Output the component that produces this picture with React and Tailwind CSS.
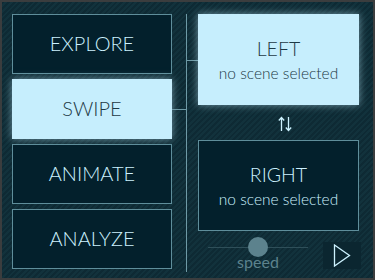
import { useState } from 'react';

const modes = ['EXPLORE', 'SWIPE', 'ANIMATE', 'ANALYZE'];

function ModeButton({ label, active, onClick }) {
  return (
    <button
      onClick={onClick}
      className={
        active
          ? 'h-[60px] w-full flex items-center justify-center pb-[3px] bg-[#c6eefd] text-[#1d3945] text-[20px] font-light shadow-[0_0_8px_rgba(190,235,252,0.55)]'
          : 'h-[60px] w-full flex items-center justify-center pb-[3px] bg-[#03202c] border border-[#5f8e9b] text-[#cdf2ff] text-[20px] font-light'
      }
    >
      {label}
    </button>
  );
}

function SceneBox({ title, active }) {
  return (
    <div
      className={
        active
          ? 'h-[91px] flex flex-col items-center justify-center bg-[#c6eefd] text-[#1d3945] font-light shadow-[0_0_8px_rgba(190,235,252,0.55)]'
          : 'h-[91px] flex flex-col items-center justify-center bg-[#03202c] border border-[#5f8e9b] text-[#cdf2ff] font-light'
      }
    >
      <span className="text-[19.5px] leading-[22px]">{title}</span>
      <span className="text-[15.5px] leading-[18px] mt-[4px]">no scene selected</span>
    </div>
  );
}

export default function App() {
  const [mode, setMode] = useState('SWIPE');
  const [speed, setSpeed] = useState(50);

  return (
    <div
      className="w-[375px] h-[280px] border-2 border-[#3b3d3e] bg-[repeating-linear-gradient(135deg,#0e2a34_0px,#0e2a34_2px,#12323c_2px,#12323c_4px)] flex pl-[10px] pt-[12px]"
      style={{ fontFamily: 'Lato, "Noto Sans", sans-serif' }}
    >
      {/* mode buttons */}
      <div className="w-[160px] flex flex-col gap-[5px]">
        {modes.map(m => (
          <ModeButton key={m} label={m} active={mode === m} onClick={() => setMode(m)} />
        ))}
      </div>

      {/* connector */}
      <div className="flex h-[258px]">
        <div className="w-[14px] pt-[95px]">
          <div className="h-px bg-[#6f9aa6]" />
        </div>
        <div className="w-px bg-[#6f9aa6]" />
        <div className="w-[11px] pt-[46px]">
          <div className="h-px bg-[#6f9aa6]" />
        </div>
      </div>

      {/* left / right scenes */}
      <div className="w-[161px] flex flex-col">
        <SceneBox title="LEFT" active />
        <div className="h-[35px] flex items-center justify-center pl-[12px] pt-[3px]">
          <svg width="14" height="16" viewBox="0 0 14 16" fill="none" stroke="#cdf2ff" strokeWidth="1.3">
            <path d="M3.5 15 V1.5 M0.8 4.5 L3.5 1.5 L6.2 4.5" />
            <path d="M10.5 1 V14.5 M7.8 11.5 L10.5 14.5 L13.2 11.5" />
          </svg>
        </div>
        <SceneBox title="RIGHT" />
        <div className="flex items-start mt-[6px]">
          <div className="w-[100px] ml-[10px] flex flex-col items-center">
            <div className="relative w-full h-[20px] flex items-center">
              <div className="w-full h-px bg-[#2f4f59]" />
              <div
                className="absolute top-0 w-[20px] h-[20px] rounded-full bg-[#5c828d]"
                style={{ left: `calc(${speed}% - 10px)` }}
              />
            </div>
            <span className="text-[16px] leading-[18px] text-[#5c828d] -mt-[4px]">speed</span>
          </div>
          <button
            onClick={() => setSpeed(speed)}
            className="ml-auto mr-[-2px] mt-[5px] w-[38px] h-[27px] bg-[#0b2630] flex items-center justify-center"
          >
            <svg width="18" height="23" viewBox="0 0 18 23">
              <path d="M1.5 1 L16.5 11.5 L1.5 22 Z" fill="none" stroke="#cdf2ff" strokeWidth="1.3" strokeLinejoin="miter" />
            </svg>
          </button>
        </div>
      </div>
    </div>
  );
}
